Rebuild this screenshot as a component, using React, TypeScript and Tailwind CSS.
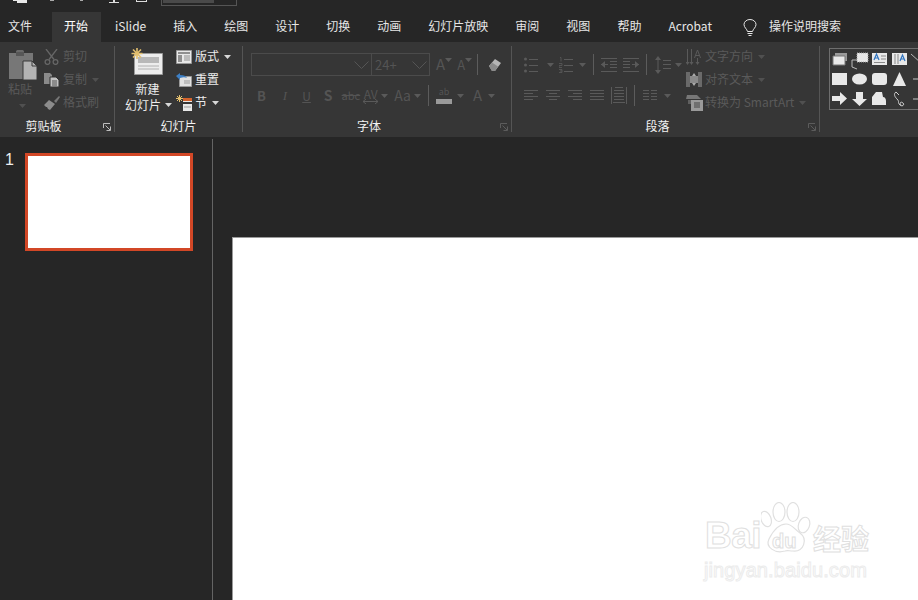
import type { ReactNode } from "react";

const DIM = "#5a5a5a";

const tabs = ["iSlide", "插入", "绘图", "设计", "切换", "动画", "幻灯片放映", "审阅", "视图", "帮助", "Acrobat"];

const Caret = ({ color = DIM, className = "" }: { color?: string; className?: string }) => (
  <svg width="7" height="4" viewBox="0 0 7 4" className={className}>
    <path d="M0 0h7L3.500 4z" fill={color} />
  </svg>
);

const Chevron = () => (
  <svg width="15" height="8" viewBox="0 0 15 8" fill="none" stroke="#555">
    <path d="M.5.5l7 7 7-7" />
  </svg>
);

const Lines = ({ rows, w = 14 }: { rows: [number, number, number][]; w?: number }) => (
  <svg width={w} height="16" viewBox={`0 0 ${w} 16`} stroke={DIM}>
    {rows.map(([y, a, b]) => (
      <path key={y} d={`M${a} ${y}.5H${b}`} />
    ))}
  </svg>
);

const Columns = () => (
  <svg width="14" height="12" viewBox="0 0 14 12" stroke={DIM}>
    <path d="M0 .5h6M8 .5h6M0 3.500h6M8 3.500h6M0 6.500h6M8 6.500h6M0 9.500h6M8 9.500h6" />
  </svg>
);

const Divider = ({ className = "" }: { className?: string }) => (
  <div className={`h-[21px] w-px bg-[#5c5c5c] ${className}`} />
);

const SmallRow = ({ icon, label, caret, dim }: { icon: ReactNode; label: string; caret?: boolean; dim?: boolean }) => (
  <div className={`flex h-[21px] items-center ${dim ? "text-[#5a5a5a]" : "text-[#ececec]"}`}>
    <div className="flex w-[19px] shrink-0 items-center">{icon}</div>
    <span className="mb-[2px] whitespace-nowrap">{label}</span>
    {caret && <Caret className="ml-[5px]" color={dim ? "#505050" : "#d8d8d8"} />}
  </div>
);

const Launcher = ({ bright }: { bright?: boolean }) => (
  <svg width="8" height="8" viewBox="0 0 8 8" fill="none" stroke={bright ? "#bdbdbd" : "#5c5c5c"}>
    <path d="M.5 5V.5H7M7.5 7.5h-4M7.5 7.5v-4M2.500 2.500l4.500 4.500" />
  </svg>
);

const Group = ({ width, label, labelClass = "", launcher, children }: { width: string; label: string; labelClass?: string; launcher?: "bright" | "dim"; children: ReactNode }) => (
  <div className={`relative my-[4px] mb-[5px] flex shrink-0 flex-col border-r border-[#555] ${width}`}>
    <div className="h-[72px]">{children}</div>
    <div className={`flex h-[14px] items-center justify-center pt-[2px] leading-[14px] text-[#f2f2f2] ${labelClass}`}>{label}</div>
    {launcher && (
      <div className="absolute bottom-[1px] right-[3px] flex">
        <Launcher bright={launcher === "bright"} />
      </div>
    )}
  </div>
);

const PasteIcon = () => (
  <svg width="28" height="30" viewBox="0 0 28 30">
    <path d="M7 1.500C7 .5 8 0 9 0h4c1 0 2 .5 2 1.500V3h3v3H4V3h3z" fill="#6a6a6a" />
    <path d="M0 3h24v26H0z" fill="#777" />
    <path d="M7 2h8v4H7z" fill="#575757" />
    <path d="M14 11h9l5 5v14H14z" fill="#b3b3b3" stroke="#3a3a3a" />
    <path d="M23 11v5h5" fill="none" stroke="#3a3a3a" />
  </svg>
);

const Scissors = () => (
  <svg width="15" height="16" viewBox="0 0 15 16" fill="none" stroke="#666" strokeWidth="1.300">
    <path d="M2 0l8 10.500M13 0L5 10.500" />
    <circle cx="3.500" cy="13" r="2.400" />
    <circle cx="11.500" cy="13" r="2.400" />
  </svg>
);

const CopyIcon = () => (
  <svg width="15" height="14" viewBox="0 0 15 14">
    <path d="M0 0h6l2 2v9H0z" fill="#8a8a8a" />
    <path d="M6 4h6l3 3v7H6z" fill="#c2c2c2" stroke="#333" />
    <path d="M8 8h5M8 10h5M8 12h5" stroke="#555" />
  </svg>
);

const BrushIcon = () => (
  <svg width="16" height="14" viewBox="0 0 16 14">
    <path d="M10 5l5-5 1 1-4 6z" fill="#777" />
    <path d="M0 9l5-5 6 4-5 6-2-1-1-2-1 0z" fill="#8c8c8c" />
  </svg>
);

const NewSlideIcon = () => (
  <svg width="32" height="27" viewBox="0 0 32 27">
    <path d="M3.500 5.500h28v21h-28z" fill="#ededed" stroke="#9a9a9a" />
    <path d="M7 9h21v6H7z" fill="#b8b8b8" />
    <path d="M7 18h21M7 21h21" stroke="#b0b0b0" />
    <path d="M6 0v11M.5 5.500h11M2 1.500l8 8M10 1.500l-8 8" stroke="#e3bf6e" strokeWidth="1.600" />
  </svg>
);

const LayoutIcon = () => (
  <svg width="16" height="14" viewBox="0 0 16 14">
    <path d="M.5.5h15v13H.5z" fill="#e8e8e8" stroke="#9a9a9a" />
    <path d="M2 2h12v2H2zM2 5h4v7H2z" fill="#8f8f8f" />
    <path d="M8 6h6M8 8h6M8 10h6" stroke="#8f8f8f" />
  </svg>
);

const ResetIcon = () => (
  <svg width="16" height="14" viewBox="0 0 16 14">
    <path d="M3.500 3.500h12v10h-12z" fill="#e0e0e0" stroke="#999" />
    <path d="M8 8h6M8 10h6" stroke="#999" />
    <path d="M0 3l4-3v2c4 0 6 1 7 3-2-1-4-1-7 0v2z" fill="#3d7fc4" />
  </svg>
);

const SectionIcon = () => (
  <svg width="17" height="16" viewBox="0 0 17 16">
    <path d="M3.500 0v7M0 3.500h7M1 1l5 5M6 1L1 6" stroke="#e3bf6e" />
    <path d="M7 3h9v3H7z" fill="#d2622c" />
    <path d="M7 6h9v1H7z" fill="#e8e8e8" />
    <path d="M7 9h9v7H7z" fill="#e8e8e8" />
    <path d="M8 12h7" stroke="#999" />
  </svg>
);

const Clear = () => (
  <svg width="15" height="16" viewBox="0 0 15 16">
    <path d="M2 9l6-7 6 4-6 8H5z" fill="#b5b5b5" />
    <path d="M2 9l3-3.500 6 4L8 14H5z" fill="#8b8b8b" />
  </svg>
);

const Bullets = () => (
  <svg width="14" height="16" viewBox="0 0 14 16">
    <g fill={DIM}>
      <circle cx="1.500" cy="2" r="1.500" />
      <circle cx="1.500" cy="8" r="1.500" />
      <circle cx="1.500" cy="14" r="1.500" />
    </g>
    <path d="M5 2.500h9M5 8.500h9M5 14.500h9" stroke={DIM} />
  </svg>
);

const Numbered = () => (
  <svg width="14" height="16" viewBox="0 0 14 16">
    <path d="M1 .5h1v4M0 6.500h3v2H0v2h3M0 12.500h3v3H0M1 14h2" stroke={DIM} fill="none" strokeWidth=".8" />
    <path d="M5 2.500h9M5 8.500h9M5 14.500h9" stroke={DIM} />
  </svg>
);

const Indent = ({ flip }: { flip?: boolean }) => (
  <svg width="16" height="16" viewBox="0 0 16 16" className={flip ? "-scale-x-100" : ""}>
    <path d="M0 7.500h7M0 1.500h16M9 4.500h7M9 7.500h7M9 10.500h7M0 14.500h16" stroke={DIM} />
    <path d="M0 7.500L4 4v7z" fill={DIM} />
  </svg>
);

const LineSpacing = () => (
  <svg width="16" height="18" viewBox="0 0 16 18">
    <path d="M3 2v14" stroke={DIM} />
    <path d="M3 0l3 4H0zM3 18l3-4H0z" fill={DIM} />
    <path d="M8 4.500h8M8 8.500h8M8 12.500h8" stroke={DIM} />
  </svg>
);

const Distributed = () => (
  <svg width="16" height="17" viewBox="0 0 16 17" fill="none" stroke={DIM}>
    <path d="M.5 0v17M15.500 0v17M3 3.500h10M3 6.500h10M3 9.500h10M3 12.500h10M2 15.500h12M4 .5h8" />
  </svg>
);

const TextDirection = () => (
  <svg width="15" height="16" viewBox="0 0 15 16">
    <path d="M1.500 0v13M5.500 0v13" stroke={DIM} />
    <path d="M1.500 16l2-3h-4zM5.500 16l2-3h-4zM11.500 16l2-3h-4z" fill={DIM} />
    <path d="M11.500 1l-3 8M11.500 1l3 8M9.500 6.500h4M11.500 9v4" stroke={DIM} fill="none" />
  </svg>
);

const AlignText = () => (
  <svg width="16" height="15" viewBox="0 0 16 15">
    <path d="M0 0h4v15H0zM12 0h4v15h-4z" fill="#6a6a6a" />
    <path d="M4 4h8v7H4z" fill="#8a8a8a" />
    <path d="M8 1L6 4h4zM8 14l-2-3h4z" fill="#aaa" />
  </svg>
);

const SmartArt = () => (
  <svg width="17" height="16" viewBox="0 0 17 16">
    <path d="M1 0h10l4 4H0z" fill="#777" />
    <path d="M2 5h3v4H2z" fill="#5f5f5f" />
    <path d="M5 5h12v11H5z" fill="#9a9a9a" />
    <path d="M8 8h6M8 10h6M8 12h6" stroke="#444" />
  </svg>
);

const shapes: ReactNode[] = [
  <g key="a"><path d="M4 3h12v8H4z" fill="#9a9a9a" /><path d="M2 6h12v9H2z" fill="#e8e8e8" stroke="#777" /></g>,
  <g key="b"><path d="M6 3h11v9H6z" fill="#e8e8e8" stroke="#aaa" strokeDasharray="1 1" /><path d="M6 10H1v7l5 2" fill="none" stroke="#bbb" /></g>,
  <g key="c"><path d="M1 3h15v12H1z" fill="#e8e8e8" /><path d="M3 10l2.500-6 2.500 6M4 8h3" fill="none" stroke="#2f74c0" strokeWidth="1.200" /><path d="M10 6h5M10 9h5M3 12.500h11" stroke="#888" /></g>,
  <g key="d"><path d="M1 3h15v12H1z" fill="#e8e8e8" /><path d="M4 4v10M7 4v10" stroke="#888" /><path d="M9 11l2.500-6 2.500 6M10 9h3" fill="none" stroke="#2f74c0" strokeWidth="1.200" /></g>,
  <path key="e" d="M0 4l10 9" stroke="#b5b5b5" fill="none" />,
  <path key="f" d="M1 3h15v12H1z" fill="#e8e8e8" />,
  <ellipse key="g" cx="8.500" cy="9" rx="7.500" ry="5.500" fill="#e8e8e8" />,
  <rect key="h" x="1" y="3" width="15" height="12" rx="3" fill="#e8e8e8" />,
  <path key="i" d="M8.500 2l6.500 14H2z" fill="#e8e8e8" />,
  <path key="j" d="M2 9h10" stroke="#c4c4c4" fill="none" />,
  <path key="k" d="M1 6h8V2l7 6.500-7 6.500v-4H1z" fill="#e8e8e8" />,
  <path key="l" d="M5 2h7v7h4l-7.500 7L1 9h4z" fill="#e8e8e8" />,
  <path key="m" d="M1 15V7l4-5h6l1 5c2 0 3 2 3 4v4z" fill="#e8e8e8" />,
  <path key="n" d="M5 2C2 4 4 7 6 9c3 3 0 3 3 6 2 2 5 0 3-2s-4 0-2 2M5 2l3 3" stroke="#d0d0d0" fill="none" />,
  <path key="o" d="M2 9h10" stroke="#c4c4c4" fill="none" />,
];

export default function App() {
  return (
    <div className="flex h-[600px] w-[918px] flex-col overflow-hidden bg-[#262626] font-['Noto_Sans_CJK_SC','Noto_Sans',sans-serif] text-[12px]">
      {/* title bar, cut off at the top of the picture */}
      <div className="flex h-[12px] items-start pl-[13px]">
        <div className="flex h-[3px] w-[14px] justify-between bg-[#e8e8e8]">
          <div className="mt-[1px] h-[2px] w-[4px] bg-[#262626]" />
        </div>
        <div className="ml-[23px] h-[1px] w-[4px] bg-[#aaa]" />
        <div className="ml-[26px] h-[1px] w-[3px] bg-[#aaa]" />
        <div className="ml-[25px] flex w-[12px] flex-col items-center">
          <div className="h-[2px] w-[2px] bg-[#ddd]" />
          <div className="h-px w-[10px] bg-[#ddd]" />
        </div>
        <div className="ml-[16px] h-[2px] w-[11px] border-x border-b border-[#ddd]" />
        <div className="ml-[14px] h-[6px] w-[76px] border-x border-b border-[#555] pr-[22px] pl-px">
          <div className="h-[3px] bg-[#4a4a4a]" />
        </div>
      </div>

      {/* tabs */}
      <div className="flex h-[30px] shrink-0 items-center gap-[3px] leading-[28px] text-[#e6e6e6]">
        <div className="w-[49px] pb-[2px] pl-[8px]">文件</div>
        <div className="w-[49px] bg-[#363636] pb-[2px] pl-[12px] text-white">开始</div>
        <div className="-ml-px flex gap-[3px]">
          {tabs.map((t) => (
            <div key={t} className="px-[12px] pb-[2px]">
              {t}
            </div>
          ))}
        </div>
        <div className="ml-[16px] flex items-center">
          <svg width="14" height="17" viewBox="0 0 14 17" fill="none" stroke="#e6e6e6">
            <path d="M4.500 12.500C4 10 1 8.500 1 5.500a6 5 0 0 1 12 0c0 3-3 4.500-3.500 7zM4.500 14.500h5M5.500 16.500h3" />
          </svg>
          <span className="ml-[12px] pb-[2px]">操作说明搜索</span>
        </div>
      </div>

      {/* ribbon */}
      <div className="flex h-[95px] shrink-0 overflow-hidden bg-[#363636]">
        <Group width="w-[115px]" label="剪贴板" labelClass="pr-[27px]" launcher="bright">
          <div className="flex">
            <div className="flex w-[44px] flex-col items-center pt-[4px] pl-[1px] text-[#5a5a5a]">
              <PasteIcon />
              <span className="mt-[1px] mr-[5px] leading-[16px]">粘贴</span>
              <Caret className="mt-[7px] mr-[1px]" color="#505050" />
            </div>
            <div className="flex flex-col gap-[2px]">
              <SmallRow dim icon={<Scissors />} label="剪切" />
              <SmallRow dim caret icon={<CopyIcon />} label="复制" />
              <SmallRow dim icon={<BrushIcon />} label="格式刷" />
            </div>
          </div>
        </Group>

        <Group width="w-[128px]" label="幻灯片">
          <div className="flex">
            <div className="flex w-[61px] flex-col items-center pl-[6px] text-[#ececec]">
              <div className="mt-[2px] ml-[-3px]">
                <NewSlideIcon />
              </div>
              <span className="mt-[6px] ml-[-2px] leading-[16px]">新建</span>
              <div className="flex items-center leading-[15px]">
                <span className="whitespace-nowrap">幻灯片</span>
                <Caret className="ml-[4px]" color="#d8d8d8" />
              </div>
            </div>
            <div className="flex flex-col gap-[2px]">
              <SmallRow caret icon={<LayoutIcon />} label="版式" />
              <SmallRow icon={<ResetIcon />} label="重置" />
              <SmallRow caret icon={<SectionIcon />} label="节" />
            </div>
          </div>
        </Group>

        <Group width="w-[269px]" label="字体" labelClass="pr-[16px]" launcher="dim">
          <div className="pt-[7px] pl-[8px] text-[#545454]">
            <div className="flex h-[23px] items-center">
              <div className="flex h-[23px] w-[121px] items-center justify-end border border-[#4b4b4b] pr-[2px]">
                <Chevron />
              </div>
              <div className="ml-[-1px] flex h-[23px] w-[59px] items-center justify-between border border-[#4b4b4b] pr-[2px] pl-[3px] text-[13px]">
                <span>24+</span>
                <Chevron />
              </div>
              <span className="ml-[6px] text-[15px]">A</span>
              <Caret className="mb-[10px]" />
              <span className="ml-[5px] text-[13px]">A</span>
              <Caret className="mb-[10px]" />
              <Divider className="ml-[5px]" />
              <div className="ml-[9px] flex">
                <Clear />
              </div>
            </div>
            <div className="mt-[8px] flex h-[23px] items-center">
              <span className="ml-[6px] text-[13px] font-bold">B</span>
              <span className="ml-[17px] font-['Liberation_Serif',serif] text-[13px] italic">I</span>
              <span className="ml-[15px] underline">U</span>
              <span className="ml-[13px] text-[14px] font-bold">S</span>
              <span className="ml-[9px] text-[11px] line-through">abc</span>
              <div className="ml-[3px] flex flex-col items-center leading-[11px]">
                <span>AV</span>
                <svg width="15" height="5" viewBox="0 0 15 5" fill="none" stroke={DIM}>
                  <path d="M0 2.500h15M3 0L0 2.500 3 5M12 0l3 2.500L12 5" />
                </svg>
              </div>
              <Caret className="ml-[3px]" />
              <span className="ml-[6px] text-[14px]">Aa</span>
              <Caret className="ml-[3px]" />
              <Divider className="ml-[7px]" />
              <div className="ml-[7px] flex flex-col items-center leading-[9px]">
                <span className="text-[9px] leading-[10px]">ab</span>
                <div className="mt-[2px] h-[5px] w-[16px] bg-[#9a9a9a]" />
              </div>
              <Caret className="ml-[5px]" />
              <span className="ml-[9px] text-[15px]">A</span>
              <Caret className="ml-[6px]" />
            </div>
          </div>
        </Group>

        <Group width="w-[308px]" label="段落" labelClass="pr-[16px]" launcher="dim">
          <div className="flex pl-[12px]">
            <div className="w-[162px] pt-[7px]">
              <div className="flex h-[23px] items-center">
                <Bullets />
                <Caret className="ml-[9px]" />
                <div className="ml-[5px] flex">
                  <Numbered />
                </div>
                <Caret className="ml-[6px]" />
                <Divider className="ml-[7px]" />
                <div className="ml-[7px] flex">
                  <Indent />
                </div>
                <div className="ml-[6px] flex">
                  <Indent flip />
                </div>
                <Divider className="ml-[7px]" />
                <div className="ml-[8px] flex">
                  <LineSpacing />
                </div>
                <Caret className="ml-[4px]" />
              </div>
              <div className="mt-[8px] flex h-[23px] items-center">
                <Lines rows={[[2, 0, 14], [5, 0, 9], [8, 0, 14], [11, 0, 9]]} />
                <div className="ml-[8px] flex">
                  <Lines rows={[[2, 0, 14], [5, 3, 11], [8, 0, 14], [11, 3, 11]]} />
                </div>
                <div className="ml-[8px] flex">
                  <Lines rows={[[2, 0, 14], [5, 5, 14], [8, 0, 14], [11, 5, 14]]} />
                </div>
                <div className="ml-[8px] flex">
                  <Lines rows={[[2, 0, 14], [5, 0, 14], [8, 0, 14], [11, 0, 14]]} />
                </div>
                <div className="ml-[7px] flex">
                  <Distributed />
                </div>
                <Divider className="ml-[7px]" />
                <div className="ml-[8px] flex">
                  <Columns />
                </div>
                <Caret className="ml-[7px]" />
              </div>
            </div>
            <div className="flex flex-col gap-[2px]">
              <SmallRow dim caret icon={<TextDirection />} label="文字方向" />
              <SmallRow dim caret icon={<AlignText />} label="对齐文本" />
              <SmallRow dim caret icon={<SmartArt />} label="转换为 SmartArt" />
            </div>
          </div>
        </Group>

        <div className="my-[6px] ml-[9px] h-[62px] w-[100px] shrink-0 border border-r-0 border-[#6e6e6e] pt-[1px] pl-[1px]">
          <div className="grid grid-cols-[repeat(5,20px)] grid-rows-[repeat(3,20px)]">
            {shapes.map((s, i) => (
              <svg key={i} width="20" height="20" viewBox="0 0 20 20">
                {s}
              </svg>
            ))}
          </div>
        </div>
      </div>

      {/* workspace */}
      <div className="flex min-h-0 flex-1 pt-[2px]">
        <div className="flex w-[212px] shrink-0 items-start pt-[12px] pl-[5px]">
          <span className="w-[20px] font-['Liberation_Sans',sans-serif] text-[16px] leading-[18px] text-[#eee]">1</span>
          <div className="mt-[2px] h-[98px] w-[168px] border-[3px] border-[#d24726] bg-white" />
        </div>
        <div className="min-w-0 flex-1 overflow-hidden border-l border-[#646464] pt-[98px] pl-[19px]">
          <div className="relative h-[400px] w-[720px] border-t border-l border-[#9a9a9a] bg-white">
            <div className="absolute top-[264px] left-[472px] flex h-[52px] items-end font-['Liberation_Sans',sans-serif] font-bold text-white [-webkit-text-stroke:1px_#e0e0e0]">
              <span className="text-[37px] leading-[36px] tracking-[-.5px]">Bai</span>
              <svg width="50" height="52" viewBox="0 0 50 52" fill="none" stroke="#e0e0e0" strokeWidth="1.200">
                <ellipse cx="5" cy="17" rx="5" ry="8" transform="rotate(-20 5 17)" />
                <ellipse cx="18" cy="10" rx="6" ry="9.500" />
                <ellipse cx="32" cy="10" rx="6" ry="9.500" />
                <ellipse cx="43" cy="23" rx="5.500" ry="8" transform="rotate(20 43 23)" />
                <path d="M25 22c6 0 8 5 14 9 8 6 4 19-7 18-4 0-6-1-8 0-10 3-20-4-16-12 3-6 9-15 17-15z" />
              </svg>
              <span className="ml-[2px] font-['Noto_Sans_CJK_SC',sans-serif] text-[28px] leading-[32px]">经验</span>
            </div>
            <div className="absolute top-[320px] left-[471px] font-['Liberation_Sans',sans-serif] text-[20px] leading-[24px] tracking-[.1px] text-white [-webkit-text-stroke:1px_#ececec]">
              jingyan.baidu.com
            </div>
            <div className="absolute top-[293px] left-[539px] font-['Liberation_Sans',sans-serif] text-[20px] leading-[20px] font-bold text-white [-webkit-text-stroke:1px_#e0e0e0]">
              du
            </div>
          </div>
        </div>
      </div>
    </div>
  );
}
